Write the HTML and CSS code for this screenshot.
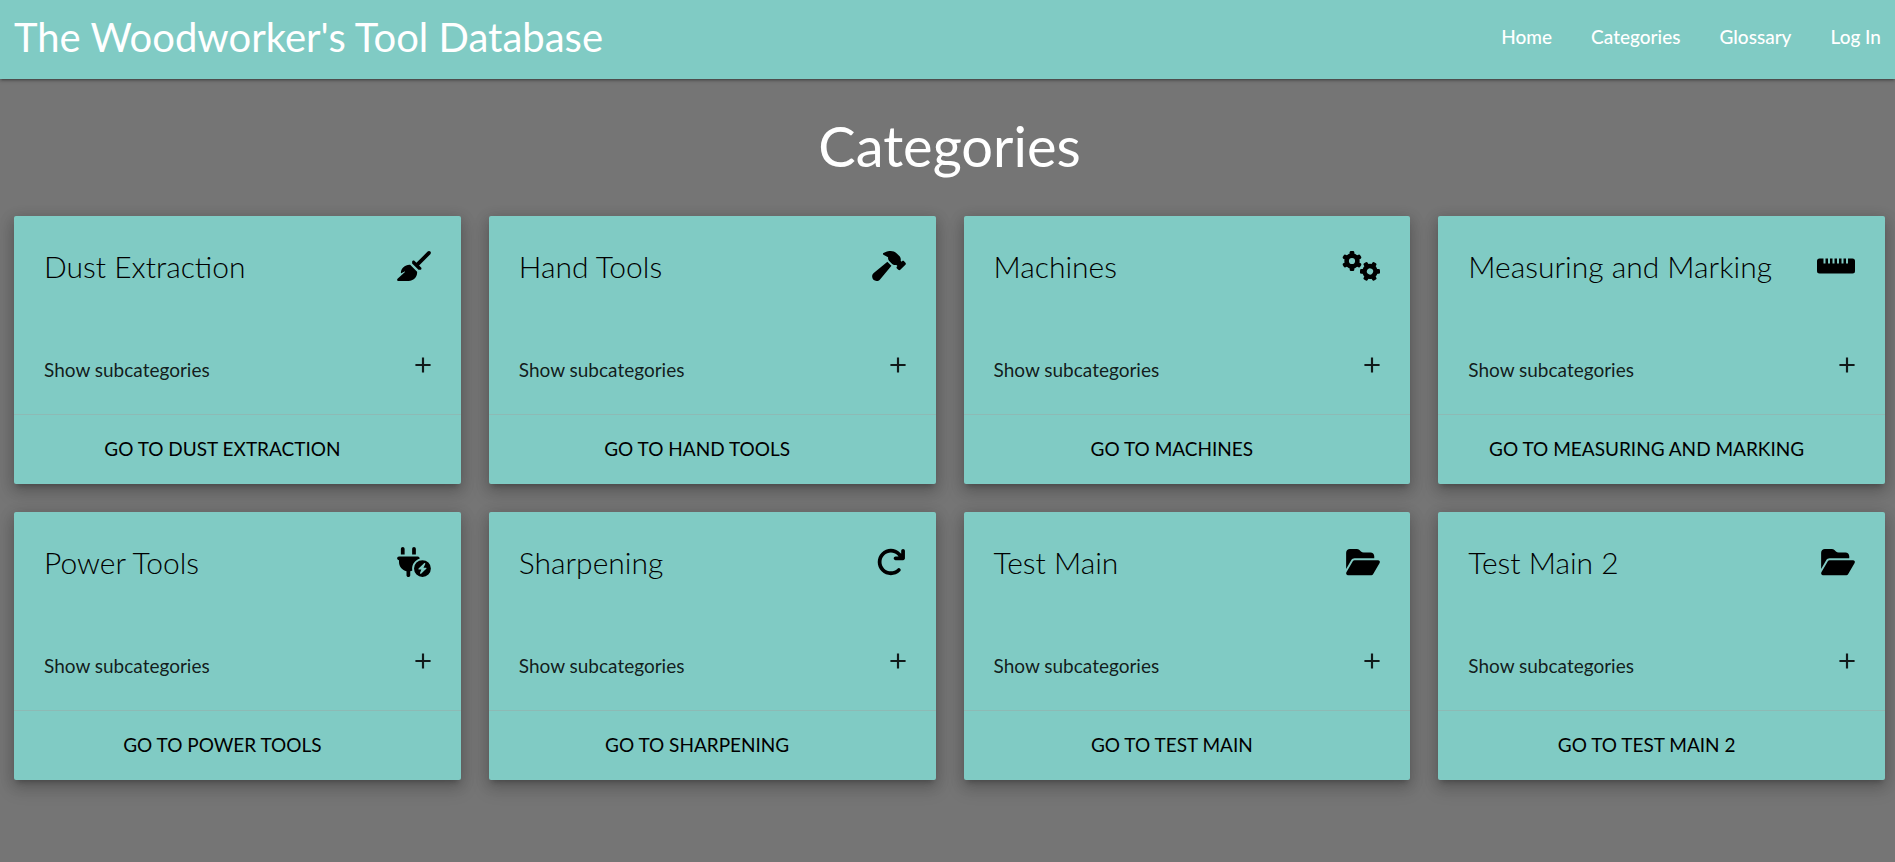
FILE: index.html
```html
<!DOCTYPE html>
<html lang="en">
<head>
<meta charset="utf-8">
<title>The Woodworker's Tool Database</title>
<link rel="stylesheet" href="styles.css">
</head>
<body>
<svg class="sprite" aria-hidden="true">
  <symbol id="plus" viewBox="0 0 24 24"><path d="M19 13h-6v6h-2v-6H5v-2h6V5h2v6h6v2z"/></symbol>
  <symbol id="folder" viewBox="0 0 576 512"><path d="M88.7 223.8L0 375.8V96C0 60.7 28.7 32 64 32H181.5c17 0 33.3 6.7 45.3 18.7l26.5 26.5c12 12 28.3 18.7 45.3 18.7H416c35.3 0 64 28.7 64 64v32H144c-22.8 0-43.8 12.1-55.3 31.8zm27.6 16.1C122.1 230 132.6 224 144 224H544c11.5 0 22 6.1 27.7 16.1s5.7 22.2-.1 32.1l-112 192C453.9 474 443.4 480 432 480H32c-11.5 0-22-6.1-27.7-16.1s-5.7-22.2 .1-32.1l112-192z"/></symbol>
</svg>
<header class="navbar">
  <a class="brand" href="#">The Woodworker's Tool Database</a>
  <nav class="menu">
    <a href="#">Home</a>
    <a href="#">Categories</a>
    <a href="#">Glossary</a>
    <a href="#">Log In</a>
  </nav>
</header>
<main>
  <h1 class="heading">Categories</h1>
  <div class="grid">
    <section class="card">
      <div class="card-body">
        <div class="card-top"><h2 class="card-title">Dust Extraction</h2>
          <svg class="icon" viewBox="0 0 576 512"><path d="M566.6 54.6c12.5-12.5 12.5-32.8 0-45.3s-32.8-12.5-45.3 0l-192 192-34.7-34.7c-4.2-4.2-10-6.6-16-6.6c-12.5 0-22.6 10.1-22.6 22.6v29.1L364.3 320h29.1c12.5 0 22.6-10.1 22.6-22.6c0-6-2.4-11.8-6.6-16l-34.7-34.7 192-192zM341.1 353.4L222.6 234.9c-42.7-3.7-85.2 11.7-115.8 42.3l-8 8C76.5 307.5 64 337.7 64 369.2c0 6.8 7.1 11.2 13.2 8.2l51.1-25.5c5-2.5 9.5 4.1 5.4 7.9L7.3 473.4C2.7 477.6 0 483.6 0 489.9C0 502.1 9.9 512 22.1 512l173.3 0c38.8 0 75.9-15.4 103.4-42.8c30.6-30.6 45.9-73.1 42.3-115.8z"/></svg></div>
        <button class="toggle" type="button">Show subcategories<svg class="plus"><use href="#plus"/></svg></button>
      </div>
      <div class="card-action"><a href="#">Go to Dust Extraction</a></div>
    </section>
    <section class="card">
      <div class="card-body">
        <div class="card-top"><h2 class="card-title">Hand Tools</h2>
          <svg class="icon" viewBox="0 0 576 512"><path d="M413.5 237.5c-28.2 4.8-58.2-3.6-80-25.4l-38.1-38.1C280.4 159 272 138.8 272 117.6V105.5L192.3 62c-5.3-2.9-8.6-8.6-8.3-14.7s3.9-11.5 9.5-14l47.2-21C259.1 4.2 279 0 299.2 0h18.1c36.7 0 72 14 98.7 39.1l44.6 42c24.2 22.8 33.2 55.7 26.6 86L503 183l8-8c9.4-9.4 24.6-9.4 33.9 0l24 24c9.4 9.4 9.4 24.6 0 33.9l-88 88c-9.4 9.4-24.6 9.4-33.9 0l-24-24c-9.4-9.4-9.4-24.6 0-33.9l8-8-17.5-17.5zM27.4 377.1L260.9 182.6c3.5 4.9 7.5 9.6 11.8 14l38.1 38.1c6 6 12.4 11.2 19.2 15.7L134.9 484.6c-14.5 17.4-36 27.4-58.6 27.4C34.1 512 0 477.8 0 435.7c0-22.6 10.1-44.1 27.4-58.6z"/></svg></div>
        <button class="toggle" type="button">Show subcategories<svg class="plus"><use href="#plus"/></svg></button>
      </div>
      <div class="card-action"><a href="#">Go to Hand Tools</a></div>
    </section>
    <section class="card">
      <div class="card-body">
        <div class="card-top"><h2 class="card-title">Machines</h2>
          <svg class="icon icon-wide" viewBox="0 0 38 30">
            <g transform="translate(10 10)">
              <circle r="5.4" fill="none" stroke="#000" stroke-width="4.6"/>
              <g id="teeth"><rect x="-2.3" y="-10" width="4.6" height="5" rx="1.3"/><rect x="-2.3" y="5" width="4.6" height="5" rx="1.3"/></g>
              <use href="#teeth" transform="rotate(60)"/><use href="#teeth" transform="rotate(120)"/>
            </g>
            <g transform="translate(28 20.4) rotate(30)">
              <circle r="5.4" fill="none" stroke="#000" stroke-width="4.6"/>
              <use href="#teeth"/><use href="#teeth" transform="rotate(60)"/><use href="#teeth" transform="rotate(120)"/>
            </g>
          </svg></div>
        <button class="toggle" type="button">Show subcategories<svg class="plus"><use href="#plus"/></svg></button>
      </div>
      <div class="card-action"><a href="#">Go to Machines</a></div>
    </section>
    <section class="card">
      <div class="card-body">
        <div class="card-top"><h2 class="card-title">Measuring and Marking</h2>
          <svg class="icon icon-wide" viewBox="0 0 38 30"><path d="M2.5 7.5H6.5V12.5h2V7.5H11V12.5h2V7.5H15.5V12.5h2V7.5H20V12.5h2V7.5H24.5V12.5h2V7.5H29V12.5h2V7.5H35.5a2.5 2.5 0 0 1 2.5 2.5V20a2.5 2.5 0 0 1-2.5 2.5H2.5a2.5 2.5 0 0 1-2.5-2.5V10a2.5 2.5 0 0 1 2.5-2.5z"/></svg></div>
        <button class="toggle" type="button">Show subcategories<svg class="plus"><use href="#plus"/></svg></button>
      </div>
      <div class="card-action"><a href="#">Go to Measuring and Marking</a></div>
    </section>
    <section class="card">
      <div class="card-body">
        <div class="card-top"><h2 class="card-title">Power Tools</h2>
          <svg class="icon" viewBox="0 0 576 512"><path d="M96 0C78.3 0 64 14.3 64 32v96h64V32c0-17.7-14.3-32-32-32zM288 0c-17.7 0-32 14.3-32 32v96h64V32c0-17.7-14.3-32-32-32zM32 160c-17.7 0-32 14.3-32 32s14.3 32 32 32v32c0 77.4 55 142 128 156.8V480c0 17.7 14.3 32 32 32s32-14.3 32-32V412.8c12.3-2.5 24.1-6.4 35.1-11.5c-2.1-10.8-3.1-21.9-3.1-33.3c0-80.3 53.8-148 127.3-169.2c.5-2.2 .7-4.5 .7-6.8c0-17.7-14.3-32-32-32H32z"/><path fill-rule="evenodd" d="M432 512a144 144 0 1 0 0-288 144 144 0 1 0 0 288zM464 273L366 366C360 374 363 383 373 383H414L390 443C388 457 399 462 409 455L498 371C504 362 500 353 490 353H450L480 291C484 277 474 267 464 273z"/></svg></div>
        <button class="toggle" type="button">Show subcategories<svg class="plus"><use href="#plus"/></svg></button>
      </div>
      <div class="card-action"><a href="#">Go to Power Tools</a></div>
    </section>
    <section class="card">
      <div class="card-body">
        <div class="card-top"><h2 class="card-title">Sharpening</h2>
          <svg class="icon" viewBox="-64 0 576 512"><path d="M386.3 160H336c-17.7 0-32 14.3-32 32s14.3 32 32 32H464c17.7 0 32-14.3 32-32V64c0-17.7-14.3-32-32-32s-32 14.3-32 32v51.2L414.4 97.6c-87.5-87.5-229.3-87.5-316.8 0s-87.5 229.3 0 316.8s229.3 87.5 316.8 0c12.5-12.5 12.5-32.8 0-45.3s-32.8-12.5-45.3 0c-62.5 62.5-163.8 62.5-226.3 0s-62.5-163.8 0-226.3s163.8-62.5 226.3 0L386.3 160z"/></svg></div>
        <button class="toggle" type="button">Show subcategories<svg class="plus"><use href="#plus"/></svg></button>
      </div>
      <div class="card-action"><a href="#">Go to Sharpening</a></div>
    </section>
    <section class="card">
      <div class="card-body">
        <div class="card-top"><h2 class="card-title">Test Main</h2>
          <svg class="icon"><use href="#folder"/></svg></div>
        <button class="toggle" type="button">Show subcategories<svg class="plus"><use href="#plus"/></svg></button>
      </div>
      <div class="card-action"><a href="#">Go to Test Main</a></div>
    </section>
    <section class="card">
      <div class="card-body">
        <div class="card-top"><h2 class="card-title">Test Main 2</h2>
          <svg class="icon"><use href="#folder"/></svg></div>
        <button class="toggle" type="button">Show subcategories<svg class="plus"><use href="#plus"/></svg></button>
      </div>
      <div class="card-action"><a href="#">Go to Test Main 2</a></div>
    </section>
  </div>
</main>
</body>
</html>
```
FILE: styles.css
```css
* { box-sizing: border-box; }
body {
  margin: 0;
  min-height: 100vh;
  background: #757575;
  font-family: Lato, sans-serif;
  font-size: 19px;
  color: rgba(0, 0, 0, 0.87);
}
a { color: inherit; text-decoration: none; }
.sprite { display: none; }
.navbar {
  display: flex;
  justify-content: space-between;
  align-items: center;
  height: 79px;
  padding: 0 14px 6px;
  background: #80cbc4;
  color: #fff;
  box-shadow: 0 2px 2px 0 rgba(0, 0, 0, 0.14), 0 3px 1px -2px rgba(0, 0, 0, 0.12), 0 1px 5px 0 rgba(0, 0, 0, 0.2);
}
.brand { font-size: 40px; font-weight: 400; }
.menu { display: flex; gap: 39px; font-weight: 500; }
.heading {
  margin: 0;
  padding: 30px 10px 34px 14px;
  font-size: 56px;
  font-weight: 400;
  line-height: 73px;
  text-align: center;
  color: #fff;
}
.grid {
  display: grid;
  grid-template-columns: repeat(4, minmax(0, 1fr));
  gap: 28px;
  padding: 0 10px 28px 14px;
}
.card {
  background: #80cbc4;
  border-radius: 2px;
  box-shadow: 0 8px 17px 2px rgba(0, 0, 0, 0.14), 0 3px 14px 2px rgba(0, 0, 0, 0.12), 0 5px 5px -3px rgba(0, 0, 0, 0.2);
}
.card-body { padding: 30px; }
.card-top {
  display: flex;
  justify-content: space-between;
  align-items: center;
  height: 40px;
  margin-bottom: 60px;
}
.card-title { margin: 0; font-size: 30px; font-weight: 300; color: #000; }
.icon { width: 34px; height: 30px; }
.icon-wide { width: 38px; }
.toggle {
  display: flex;
  justify-content: space-between;
  align-items: flex-end;
  width: 100%;
  height: 38px;
  padding: 0;
  border: 0;
  background: none;
  font: inherit;
  line-height: 28px;
  color: inherit;
}
.plus { width: 26px; height: 26px; margin: 0 -5px 6px 0; fill: currentColor; }
.card-action {
  padding: 20px 30px 21px;
  border-top: 1px solid rgba(160, 160, 160, 0.4);
  text-align: center;
  text-transform: uppercase;
  line-height: 28px;
  color: #000;
}
.card-action a { margin-right: 30px; }
```
